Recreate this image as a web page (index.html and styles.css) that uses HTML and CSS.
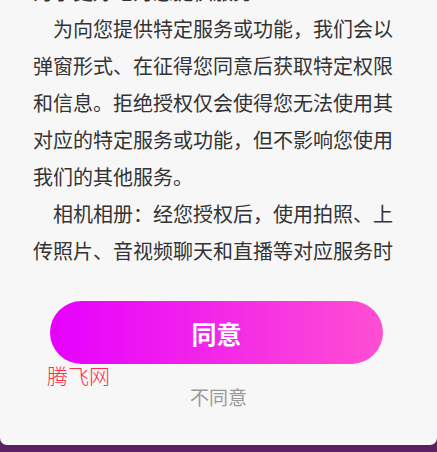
FILE: index.html
```html
<!DOCTYPE html>
<html lang="zh-CN">
<head>
    <meta charset="UTF-8">
    <meta name="viewport" content="width=device-width, initial-scale=1.0">
    <title>权限说明</title>
    <link rel="stylesheet" href="styles.css">
</head>
<body>

    <!-- 授权弹窗 -->
    <div class="dialog">
        <div class="content">
            <div class="scroll">
                <p class="line-top">为了更好地为您提供服务：</p>
                <p class="para">为向您提供特定服务或功能，我们会以弹窗形式、在征得您同意后获取特定权限和信息。拒绝授权仅会使得您无法使用其对应的特定服务或功能，但不影响您使用我们的其他服务。</p>
                <p class="para">相机相册：经您授权后，使用拍照、上传照片、音视频聊天和直播等对应服务时，我们会访问您的相机和相册。</p>
            </div>
        </div>

        <button class="btn-agree">同意</button>
        <span class="watermark">腾飞网</span>
        <div class="btn-refuse">不同意</div>
    </div>

</body>
</html>
```

FILE: styles.css
```css
* {
    margin: 0;
    padding: 0;
    box-sizing: border-box;
    font-family: "Noto Sans CJK SC", "Noto Sans", sans-serif;
}

body {
    background: #5a2060;
    height: 452px;
    overflow: hidden;
}

/* 弹窗 */
.dialog {
    position: relative;
    height: 445px;
    background: #f7f7f7;
    border-radius: 0 0 7px 7px;
}

.content {
    height: 272px;
    overflow: hidden;
    padding: 0 44px 0 33px;
}

.scroll {
    margin-top: -27px;
}

.content p {
    font-size: 20px;
    line-height: 37px;
    color: #333;
    text-align: justify;
}

.line-top {
    white-space: nowrap;
}

.para {
    text-indent: 1em;
    line-break: anywhere;
}

/* 按钮 */
.btn-agree {
    display: block;
    width: 333px;
    height: 63px;
    margin: 29px 0 0 50px;
    border: none;
    border-radius: 32px;
    background: linear-gradient(90deg, #e600fe, #ff4fd2);
    color: #fff;
    font-size: 25px;
    font-weight: bold;
    cursor: pointer;
}

.btn-refuse {
    margin-top: 21px;
    text-align: center;
    font-size: 19px;
    line-height: 24px;
    color: #999;
}

.watermark {
    position: absolute;
    left: 47px;
    top: 362px;
    font-size: 21px;
    line-height: 26px;
    color: #ff2d4a;
    font-family: "Noto Sans CJK SC", serif;
    font-weight: 300;
}
```
